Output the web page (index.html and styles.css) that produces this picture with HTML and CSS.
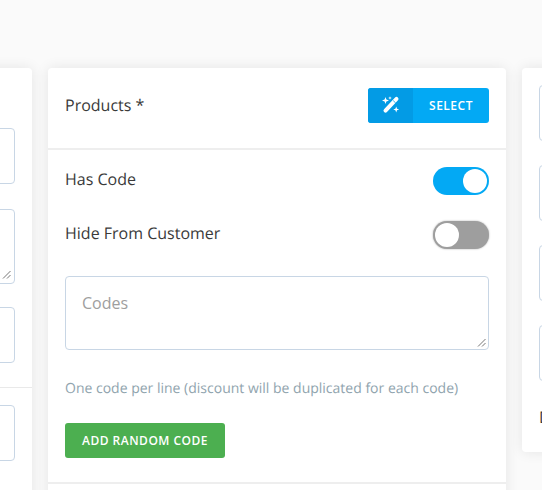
FILE: index.html
```
<!DOCTYPE html>
<html lang="en">
<head>
<meta charset="utf-8">
<title>Discount</title>
<link rel="stylesheet" href="styles.css">
</head>
<body>
<div class="board">
  <section class="card card-left">
    <div class="left-top">
      <div class="field field-56"></div>
      <div class="field field-75"><svg class="grip grip-left" viewBox="0 0 9 9" width="9" height="9"><path d="M1 8.5 8.5 1M5 8.5 8.5 5" class="grip-line"/></svg></div>
      <div class="field field-56"></div>
    </div>
    <div class="left-bottom">
      <div class="field field-56"></div>
    </div>
  </section>

  <section class="card card-main">
    <header class="main-head">
      <span class="label">Products *</span>
      <button class="btn-select" type="button">
        <span class="btn-icon">
          <svg viewBox="0 0 20 20" width="20" height="20">
            <path class="wand" d="M15.5 2.9 4.5 14.6"/>
            <path class="wand-notch" d="M12.2 4.6 14.7 7"/>
            <path class="star" d="M4.5 1 5.4 3.6 8 4.5 5.4 5.4 4.5 8 3.6 5.4 1 4.5 3.6 3.6Z"/>
            <path class="star" d="M9 .2 9.5 1.5 10.8 2 9.5 2.5 9 3.8 8.5 2.5 7.2 2 8.5 1.5Z"/>
            <path class="star" d="M15.2 10.5 16 12.7 18.2 13.5 16 14.3 15.2 16.5 14.4 14.3 12.2 13.5 14.4 12.7Z"/>
          </svg>
        </span>
        <span class="btn-text">SELECT</span>
      </button>
    </header>
    <div class="main-body">
      <div class="toggle-row">
        <span class="label">Has Code</span>
        <span class="toggle toggle-on"><span class="knob"></span></span>
      </div>
      <div class="toggle-row">
        <span class="label">Hide From Customer</span>
        <span class="toggle toggle-off"><span class="knob"></span></span>
      </div>
      <div class="codes-wrap">
        <textarea class="codes" placeholder="Codes"></textarea>
        <svg class="grip grip-codes" viewBox="0 0 9 9" width="9" height="9"><path d="M1 8.5 8.5 1M5 8.5 8.5 5" class="grip-line"/></svg>
      </div>
      <p class="help">One code per line (discount will be duplicated for each code)</p>
      <button class="btn-random" type="button">ADD RANDOM CODE</button>
    </div>
    <div class="main-foot"></div>
  </section>

  <section class="card card-right">
    <div class="field field-56"></div>
    <div class="field field-56"></div>
    <div class="field field-56"></div>
    <div class="field field-56"></div>
    <span class="label right-label">Discount</span>
  </section>
</div>
</body>
</html>
```
FILE: styles.css
```
* { box-sizing: border-box; }
html, body { margin: 0; height: 100%; }
body {
  background: #fafafa;
  font-family: "Open Sans", sans-serif;
  color: #333;
  overflow: hidden;
  text-rendering: geometricPrecision;
}
.board {
  display: flex;
  align-items: flex-start;
  gap: 16px;
  width: 1000px;
  margin-left: -168px;
  padding-top: 68px;
}
.card {
  flex: none;
  background: #fff;
  border-radius: 4px;
  box-shadow: 0 0 14px rgba(0, 0, 0, 0.09);
}
.card-left { width: 200px; height: 500px; }
.left-top { padding: 60px 17px 24px; display: flex; flex-direction: column; gap: 24px; border-bottom: 1px solid #e9e9e9; }
.left-bottom { padding: 17px; }
.field { border: 1px solid #c8d6e5; border-radius: 4px; background: #fff; }
.field-56 { height: 56px; flex: none; }
.field-75 { height: 75px; margin: 1px 0 -1px; position: relative; }
.grip { position: absolute; }
.grip-left { right: 3px; bottom: 4px; }
.grip-codes { right: 3px; bottom: 3px; }
.grip-line { fill: none; stroke: #777; stroke-width: 1; }

.card-main { width: 458px; height: 500px; }
.main-head {
  height: 82px;
  padding: 20px 17px 0;
  display: flex;
  justify-content: space-between;
  align-items: flex-start;
  border-bottom: 2px solid #eee;
}
.label { font-size: 16px; line-height: 22px; color: #3a3a3a; }
.main-head .label { margin-top: 6px; }
.btn-select {
  display: flex;
  width: 121px;
  height: 35px;
  padding: 0;
  border: 0;
  border-radius: 3px;
  background: #03a9f4;
  color: #fff;
  overflow: hidden;
  font-family: inherit;
}
.btn-icon { width: 45px; height: 100%; background: #039be5; display: flex; align-items: center; justify-content: center; }
.star { fill: #fff; }
.wand { fill: none; stroke: #fff; stroke-width: 4; stroke-linecap: round; }
.wand-notch { fill: none; stroke: #039be5; stroke-width: 0.8; }
.btn-text { flex: 1; font-size: 12px; line-height: 35px; font-weight: 600; letter-spacing: 0.5px; text-align: center; }
.main-body { padding: 17px 17px 0; }
.toggle-row { display: flex; justify-content: space-between; align-items: center; height: 28px; margin-bottom: 26px; }
.toggle-row .label { margin-top: -5px; }
.toggle { width: 56px; height: 28px; border-radius: 14px; display: flex; padding: 2px; }
.toggle-on { background: #03a9f4; justify-content: flex-end; }
.toggle-off { background: #9e9e9e; justify-content: flex-start; box-shadow: 0 0 2px rgba(0, 0, 0, 0.35); }
.knob { width: 24px; height: 24px; border-radius: 50%; background: #fff; }
.codes-wrap { position: relative; margin-top: 27px; }
.codes {
  display: block;
  width: 100%;
  height: 74px;
  padding: 15px 16px;
  border: 1px solid #c8d6e5;
  border-radius: 4px;
  font-family: inherit;
  font-size: 16px;
  line-height: 22px;
  outline: 0;
  resize: none;
}
.codes::placeholder { color: #9e9e9e; opacity: 1; }
.help { margin: 30px 0 0; font-size: 14px; line-height: 18px; color: #90a4ae; }
.btn-random {
  display: block;
  width: 160px;
  height: 35px;
  margin-top: 25px;
  padding: 0;
  border: 0;
  border-radius: 3px;
  background: #4caf50;
  color: #fff;
  font-family: inherit;
  font-size: 12px;
  font-weight: 600;
  letter-spacing: 0.5px;
}
.main-foot { margin-top: 24px; border-top: 2px solid #eee; }

.card-right { width: 200px; height: 384px; padding: 17px 0 0 17px; display: flex; flex-direction: column; gap: 24px; align-items: stretch; }
.card-right .field { width: 183px; }
.right-label { margin-top: 1px; }
```
